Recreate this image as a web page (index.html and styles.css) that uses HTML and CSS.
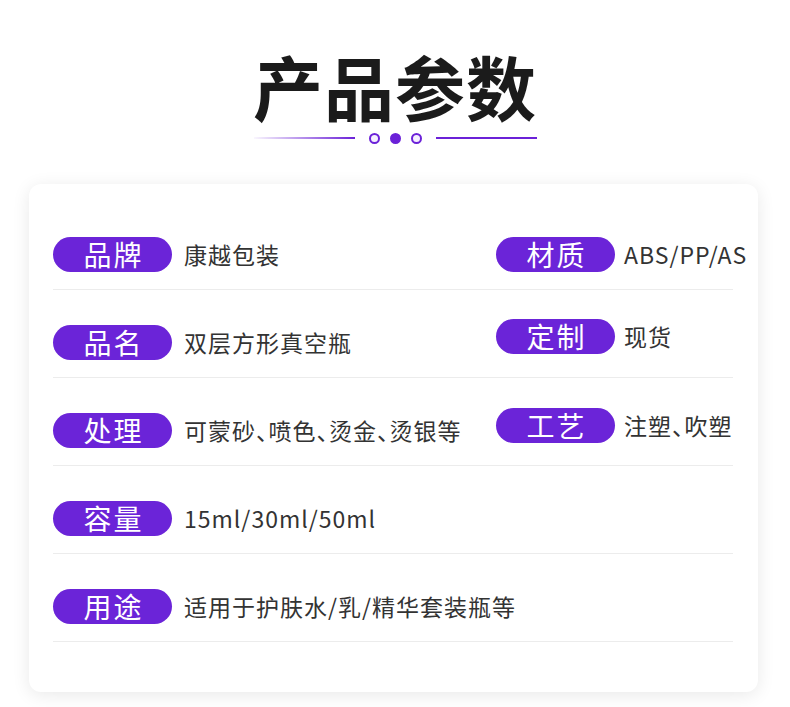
FILE: index.html
```html
<!DOCTYPE html>
<html lang="zh-CN">
<head>
<meta charset="utf-8">
<link rel="stylesheet" href="styles.css">
</head>
<body>
<div class="page">
  <header class="head">
    <h1 class="title">产品参数</h1>
    <div class="decor">
      <span class="line line-left"></span>
      <span class="dot"></span>
      <span class="dot dot-fill"></span>
      <span class="dot"></span>
      <span class="line line-right"></span>
    </div>
  </header>
  <section class="card">
    <div class="row">
      <div class="cell"><span class="pill">品牌</span><span class="val">康越包装</span></div>
      <div class="cell cell-r"><span class="pill">材质</span><span class="val">ABS/PP/AS</span></div>
    </div>
    <div class="row">
      <div class="cell"><span class="pill">品名</span><span class="val">双层方形真空瓶</span></div>
      <div class="cell cell-r up12"><span class="pill">定制</span><span class="val">现货</span></div>
    </div>
    <div class="row">
      <div class="cell"><span class="pill">处理</span><span class="val">可蒙砂、喷色、烫金、烫银等</span></div>
      <div class="cell cell-r up10"><span class="pill">工艺</span><span class="val">注塑、吹塑</span></div>
    </div>
    <div class="row">
      <div class="cell"><span class="pill">容量</span><span class="val">15ml/30ml/50ml</span></div>
    </div>
    <div class="row">
      <div class="cell"><span class="pill">用途</span><span class="val">适用于护肤水/乳/精华套装瓶等</span></div>
    </div>
  </section>
</div>
</body>
</html>
```
FILE: styles.css
```css
* { box-sizing: border-box; }
html, body { margin: 0; padding: 0; }
body {
  background: #ffffff;
  font-family: "Noto Sans CJK SC", "Noto Sans", sans-serif;
  width: 790px;
  height: 707px;
  overflow: hidden;
}
.page {
  padding-top: 36px;
}
.head {
  display: flex;
  flex-direction: column;
  align-items: center;
}
.title {
  margin: 0;
  font-size: 70px;
  line-height: 100px;
  font-weight: 700;
  color: #1b1b1b;
  letter-spacing: 1px;
}
.decor {
  display: flex;
  align-items: center;
  height: 12px;
  margin-top: -4px;
  margin-bottom: -2px;
}
.line {
  width: 101px;
  height: 1.5px;
}
.line-left {
  background: linear-gradient(to right, rgba(107,33,216,0.04), #6b21d8);
  margin-right: 9px;
}
.line-right {
  background: #6b21d8;
  margin-left: 9px;
}
.dot {
  width: 11px;
  height: 11px;
  border-radius: 50%;
  border: 2px solid #6b21d8;
  background: #f6f0ff;
  margin: 0 5px;
}
.dot-fill {
  background: #6b21d8;
}
.card {
  margin: 42px 32px 0 29px;
  height: 508px;
  background: #fff;
  border-radius: 12px;
  box-shadow: 0 3px 18px rgba(0,0,0,0.09);
  padding: 18px 25px 0 24px;
}
.row {
  display: grid;
  grid-template-columns: 443px 1fr;
  height: 88px;
  padding-top: 35px;
  padding-bottom: 17px;
  border-bottom: 1px solid #ececec;
}
.cell {
  display: flex;
  align-items: center;
  height: 35px;
  white-space: nowrap;
}
.up12 { margin-top: -6px; }
.up10 { margin-top: -5px; }
.pill {
  flex: none;
  width: 119px;
  height: 35px;
  border-radius: 18px;
  background: #6b24d8;
  color: #fff;
  font-size: 28px;
  line-height: 35px;
  text-align: center;
  letter-spacing: 2px;
  padding-left: 2px;
}
.val {
  margin-left: 12px;
  font-size: 23px;
  letter-spacing: 1px;
  color: #333;
  line-height: 35px;
  font-feature-settings: "halt" 1;
}
.cell-r .val {
  margin-left: 9px;
}
```
